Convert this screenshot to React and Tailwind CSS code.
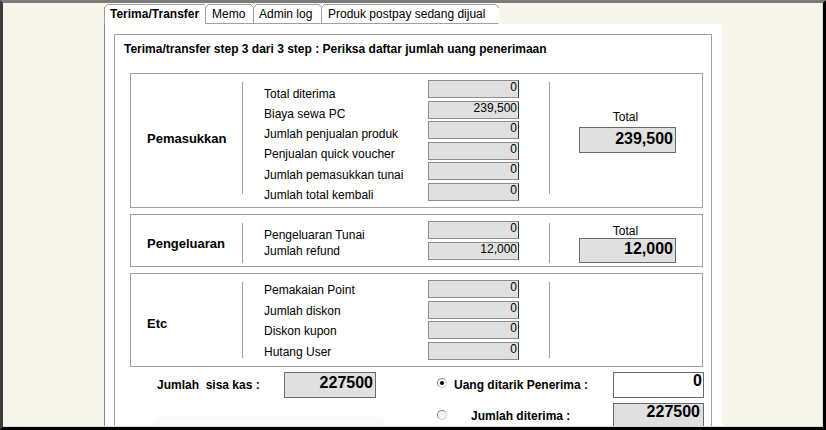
import React from 'react';

const cream = '#f8f6ea';

const tabs = [
  { label: 'Terima/Transfer', cls: 'w-[102px] pl-[5px] border-l font-bold', active: true },
  { label: 'Memo', cls: 'w-[48px] pl-[6px]' },
  { label: 'Admin log', cls: 'w-[68px] pl-[5px]' },
  { label: 'Produk postpay sedang dijual', cls: 'w-[177px] pl-[6px] border-r-transparent' },
];

const pemasukkan = [
  ['Total diterima', '0'],
  ['Biaya sewa PC', '239,500'],
  ['Jumlah penjualan produk', '0'],
  ['Penjualan quick voucher', '0'],
  ['Jumlah pemasukkan tunai', '0'],
  ['Jumlah total kembali', '0'],
];

const pengeluaran = [
  ['Pengeluaran Tunai', '0'],
  ['Jumlah refund', '12,000'],
];

const etc = [
  ['Pemakaian Point', '0'],
  ['Jumlah diskon', '0'],
  ['Diskon kupon', '0'],
  ['Hutang User', '0'],
];

function Corner({ side }) {
  // cut corner on top of each tab
  if (side === 'left') {
    return (
      <svg className="absolute -left-px -top-px" width="4" height="4" viewBox="0 0 4 4">
        <polygon points="0,0 4,0 0,4" fill={cream} />
        <line x1="0" y1="4" x2="4" y2="0" stroke="#a0a0a0" strokeWidth="1" />
      </svg>
    );
  }
  return (
    <svg className="absolute -right-px -top-px" width="4" height="4" viewBox="0 0 4 4">
      <polygon points="0,0 4,0 4,4" fill={cream} />
      <line x1="0" y1="0" x2="4" y2="4" stroke="#a0a0a0" strokeWidth="1" />
    </svg>
  );
}

function Field({ value }) {
  return (
    <div className="h-[18px] bg-[#e0e0e0] border border-[#8c8c8c] border-r-[#3a3a3a] text-right pr-[1px] text-[12px] leading-[13px]">
      {value}
    </div>
  );
}

function Section({ title, box, titlePad, labelPad, labelLead, fieldGap, rule, rows, total }) {
  return (
    <div className={`flex border border-[#a0a0a0] ${box}`}>
      <div className={`w-[111px] pl-[16px] font-bold text-[13px] leading-[14px] ${titlePad}`}>{title}</div>
      <div className={`w-px bg-[#a0a0a0] mt-[8px] ${rule}`} />
      <div className={`w-[185px] pl-[21px] text-[12px] ${labelPad} ${labelLead}`}>
        {rows.map((r) => (
          <div key={r[0]} className="whitespace-nowrap">{r[0]}</div>
        ))}
      </div>
      <div className={`w-[91px] pt-[6px] flex flex-col ${fieldGap}`}>
        {rows.map((r) => (
          <Field key={r[0]} value={r[1]} />
        ))}
      </div>
      <div className={`ml-[30px] w-px bg-[#a0a0a0] mt-[8px] ${rule}`} />
      {total && (
        <div className={`pl-[29px] ${total.pad}`}>
          <div className="w-[97px] text-center pr-[4px] text-[12px] leading-[14px]">Total</div>
          <div className={`w-[97px] border border-[#6a6a6a] bg-[#e0e0e0] text-right pr-[2px] font-bold text-[16px] ${total.box}`}>
            {total.value}
          </div>
        </div>
      )}
    </div>
  );
}

function Radio({ checked, cls }) {
  return (
    <div className={`w-[10px] h-[10px] rounded-full border border-[#8a8a8a] border-r-[#d0d0d0] border-b-[#d0d0d0] bg-[#f4f4f4] flex items-center justify-center ${cls}`}>
      {checked && <div className="w-[4px] h-[4px] rounded-full bg-black" />}
    </div>
  );
}

export default function App() {
  return (
    <div className="w-[826px] h-[430px] overflow-hidden border-t-[3px] border-t-[#7c7c7c] border-l-[3px] border-l-[#3c3c3c] border-r-[3px] border-r-black border-b-[3px] border-b-black bg-[#f8f6ea] text-black font-['Liberation_Sans',Arial,sans-serif]">
      <div className="h-full flex flex-col border-r border-b border-[#d6d6d6]">
        {/* tabs */}
        <div className="ml-[101px] mt-[1px] flex">
          {tabs.map((t) => (
            <div
              key={t.label}
              className={`relative h-[20px] bg-white border-t border-r border-[#a0a0a0] text-[12px] leading-[18px] whitespace-nowrap ${t.cls} ${t.active ? 'border-b-0' : 'border-b'}`}
            >
              <Corner side="left" />
              {t.label}
              {!t.active && <Corner side="right" />}
            </div>
          ))}
        </div>

        {/* panel */}
        <div className="ml-[101px] w-[618px] flex-1 bg-white border-l border-[#888] pl-[9px] pt-[10px] overflow-hidden">
          <div className="w-[598px] h-[420px] border border-[#a0a0a0]">
            <div className="pl-[9px] pt-[7px] font-bold text-[12px] leading-[14px]">
              Terima/transfer step 3 dari 3 step : Periksa daftar jumlah uang penerimaan
            </div>

            <div className="ml-[15px] mt-[17px] w-[573px] flex flex-col gap-[6px]">
              <Section
                title="Pemasukkan"
                box="h-[135px]"
                titlePad="pt-[58px]"
                labelPad="pt-[9.5px]"
                labelLead="leading-[20.3px]"
                fieldGap="gap-[2.6px]"
                rule="h-[112px]"
                rows={pemasukkan}
                total={{ pad: 'pt-[36px]', box: 'mt-[3px] h-[26px] leading-[22px]', value: '239,500' }}
              />
              <Section
                title="Pengeluaran"
                box="h-[53px]"
                titlePad="pt-[22px]"
                labelPad="pt-[11.5px]"
                labelLead="leading-[16px]"
                fieldGap="gap-[3px]"
                rule="h-[40px]"
                rows={pengeluaran}
                total={{ pad: 'pt-[9px]', box: 'h-[25px] leading-[19px]', value: '12,000' }}
              />
              <Section
                title="Etc"
                box="h-[94px]"
                titlePad="pt-[43px]"
                labelPad="pt-[6px]"
                labelLead="leading-[20.5px]"
                fieldGap="gap-[2.67px]"
                rule="h-[76px]"
                rows={etc}
              />
            </div>

            {/* bottom */}
            <div className="mt-[5px] flex">
              <div className="w-[322px]">
                <div className="flex items-center h-[26px]">
                  <div className="ml-[42px] w-[127px] font-bold text-[12px] whitespace-pre">Jumlah  sisa kas :</div>
                  <div className="w-[92px] h-[26px] border border-[#6a6a6a] bg-[#e0e0e0] text-right pr-[2px] font-bold text-[16px] leading-[20px]">
                    227500
                  </div>
                </div>
                <div className="ml-[37px] mt-[18px] w-[233px] h-[12px] rounded-t-[8px] bg-[#fafafa]" />
              </div>
              <div>
                <div className="flex h-[26px]">
                  <Radio checked cls="mt-[6px]" />
                  <div className="ml-[7px] w-[159px] self-center font-bold text-[12px] whitespace-nowrap">Uang ditarik Penerima :</div>
                  <div className="w-[91px] h-[26px] border border-[#6a6a6a] bg-white text-right pr-[1px] font-bold text-[16px] leading-[16px]">
                    0
                  </div>
                </div>
                <div className="mt-[5px] flex h-[26px]">
                  <Radio cls="mt-[7px]" />
                  <div className="ml-[7px] w-[159px] pl-[17px] self-center font-bold text-[12px] whitespace-nowrap">Jumlah diterima :</div>
                  <div className="w-[91px] h-[26px] border border-[#6a6a6a] bg-[#e0e0e0] text-right pr-[3px] font-bold text-[16px] leading-[16px]">
                    227500
                  </div>
                </div>
              </div>
            </div>
          </div>
        </div>
      </div>
    </div>
  );
}
